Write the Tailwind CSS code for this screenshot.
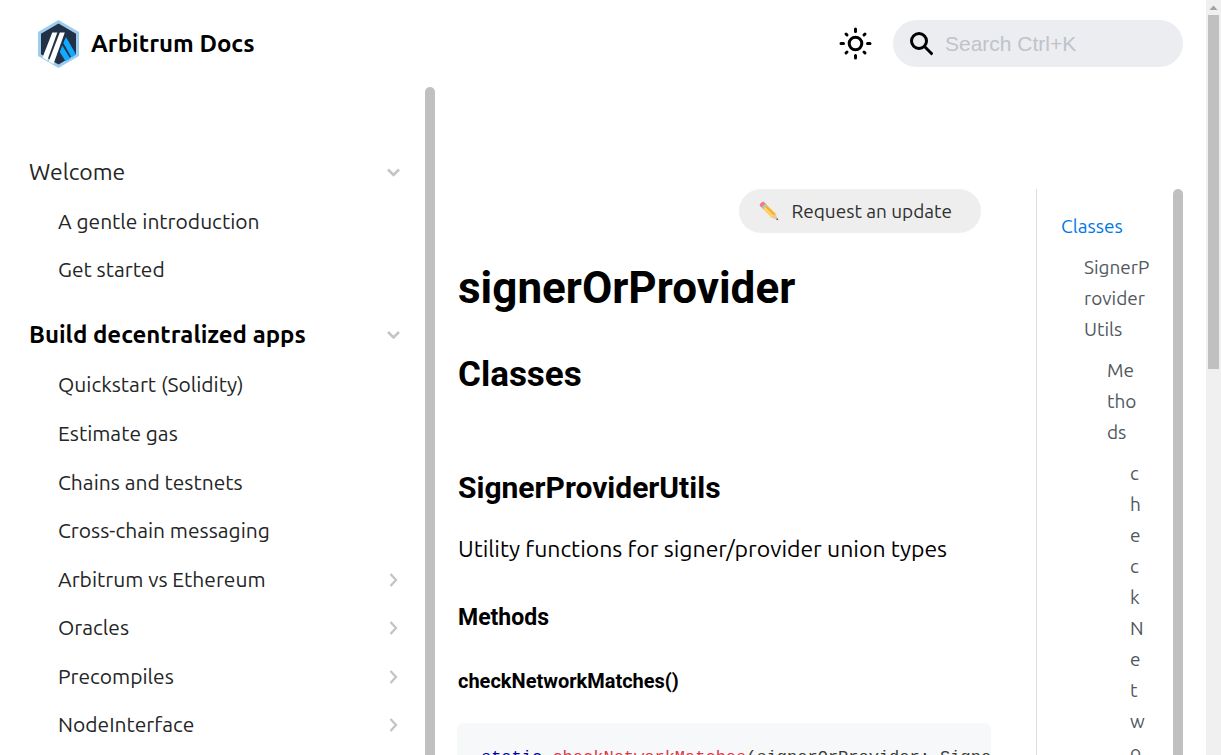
<!DOCTYPE html>
<html lang="en">
<head>
<meta charset="utf-8">
<title>signerOrProvider | Arbitrum Docs</title>
<script src="https://cdn.jsdelivr.net/npm/@tailwindcss/browser@4"></script>
</head>
<body class="flex h-screen overflow-hidden bg-white font-['Ubuntu','Noto_Sans',sans-serif] text-black">
<div class="flex min-w-0 flex-1 flex-col">
  <header class="flex h-[87px] shrink-0 items-center justify-between pr-[23px] pl-[38px]">
    <a href="#" class="flex items-center gap-3 text-2xl font-bold">
      <svg class="h-12 w-[41px]" viewBox="0 0 41 48" aria-hidden="true">
        <path d="M20.500 0 41 12v24L20.500 48 0 36V12z" fill="#9dcced"/>
        <path d="M20.500 3.500 38 13.700v20.600L20.500 44.500 3 34.300V13.700z" fill="#213147"/>
        <path d="M28 17 38 34.500 33.500 37.500 25.300 23z" fill="#12aaff"/>
        <path d="M24.300 25.500 32.300 38.500 27.500 41.300 21.800 32z" fill="#12aaff"/>
        <path d="M14.300 12.500h5L9.300 40.500 4.500 37.500z" fill="#fff"/>
        <path d="M21.800 12.500h5L15.500 44 10.700 41.500z" fill="#fff"/>
      </svg>
      <span>Arbitrum Docs</span>
    </a>
    <div class="flex items-center gap-5">
      <button type="button" aria-label="Switch theme" class="flex size-9 items-center justify-center">
        <svg class="size-9" viewBox="0 0 36 36" fill="none" stroke="#000" stroke-width="3" stroke-linecap="round" aria-hidden="true">
          <circle cx="18.500" cy="17.500" r="6.300"/>
          <path d="M18.500 3v2.500M18.500 29.500V32M4 17.500h2.500M30.500 17.500H33M9 8l1 1M27 26l1 1M9 27l1-1M27 9l1-1"/>
        </svg>
      </button>
      <label class="flex h-[47px] w-[290px] items-center gap-3 rounded-full bg-[#ebedf0] px-4">
        <svg class="size-6 shrink-0" viewBox="0 0 24 24" fill="none" stroke="#000" stroke-width="3" aria-hidden="true">
          <circle cx="10" cy="9" r="7.500"/><path d="m15.500 14.500 8 8"/>
        </svg>
        <input type="search" aria-label="Search" placeholder="Search Ctrl+K" class="w-full min-w-0 bg-transparent font-['Liberation_Sans',sans-serif] text-[21px] outline-none placeholder:text-[#bfc3c9]">
      </label>
    </div>
  </header>
  <div class="flex min-h-0 flex-1">
    <aside class="flex w-[435px] shrink-0">
      <nav aria-label="Docs" class="flex-1 overflow-hidden pt-[60px] pr-6 pl-[29px] text-[21px] text-[#242526]">
        <button type="button" class="flex h-[51px] w-full items-center justify-between text-[23px]"><span>Welcome</span>
          <svg class="size-4" viewBox="0 0 16 16" fill="none" stroke="#c4c4c4" stroke-width="2.500" aria-hidden="true"><path d="m3 4.500 5.500 5.500L14 4.500"/></svg></button>
        <ul class="pl-[29px]">
          <li class="flex h-12 items-center"><a href="#">A gentle introduction</a></li>
          <li class="flex h-12 items-center"><a href="#">Get started</a></li>
        </ul>
        <button type="button" class="mt-[15px] flex h-[51px] w-full items-center justify-between text-2xl font-bold text-black"><span>Build decentralized apps</span>
          <svg class="size-4" viewBox="0 0 16 16" fill="none" stroke="#c4c4c4" stroke-width="2.500" aria-hidden="true"><path d="m3 5 5.500 5.500L14 5"/></svg></button>
        <ul class="pl-[29px]">
          <li class="flex h-[49px] items-center"><a href="#">Quickstart (Solidity)</a></li>
          <li class="flex h-[49px] items-center"><a href="#">Estimate gas</a></li>
          <li class="flex h-[49px] items-center"><a href="#">Chains and testnets</a></li>
          <li class="flex h-12 items-center"><a href="#">Cross-chain messaging</a></li>
          <li class="flex h-[49px] items-center justify-between"><a href="#">Arbitrum vs Ethereum</a>
            <svg class="size-4" viewBox="0 0 16 16" fill="none" stroke="#c4c4c4" stroke-width="2.300" aria-hidden="true"><path d="m5.500 2 5.500 6-5.500 6"/></svg></li>
          <li class="flex h-12 items-center justify-between"><a href="#">Oracles</a>
            <svg class="size-4" viewBox="0 0 16 16" fill="none" stroke="#c4c4c4" stroke-width="2.300" aria-hidden="true"><path d="m5.500 2 5.500 6-5.500 6"/></svg></li>
          <li class="flex h-[49px] items-center justify-between"><a href="#">Precompiles</a>
            <svg class="size-4" viewBox="0 0 16 16" fill="none" stroke="#c4c4c4" stroke-width="2.300" aria-hidden="true"><path d="m5.500 2 5.500 6-5.500 6"/></svg></li>
          <li class="flex h-12 items-center justify-between"><a href="#">NodeInterface</a>
            <svg class="size-4" viewBox="0 0 16 16" fill="none" stroke="#c4c4c4" stroke-width="2.300" aria-hidden="true"><path d="m5.500 2 5.500 6-5.500 6"/></svg></li>
        </ul>
      </nav>
      <div class="w-2.5 rounded-t-full bg-[#c0c0c0]"></div>
    </aside>
    <main class="flex min-w-0 flex-1 overflow-hidden pt-[102px] pr-[23px] pl-[22px]">
      <article class="min-w-0 flex-1 pr-[45px] font-['Roboto',sans-serif]">
        <div class="flex justify-end pr-2.5">
          <a href="#" class="flex h-11 items-center gap-3 rounded-full bg-[#eeeeee] pr-[29px] pl-5 font-['Ubuntu','Noto_Sans',sans-serif] text-[19px] text-[#303030]">
            <svg class="size-5" viewBox="0 0 20 20" aria-hidden="true">
              <path d="m6 2 10.500 10.500 2 6-6-2L2 6z" fill="#ffc64a"/>
              <path d="m4.700 7.300 2.700-2.700L16.500 13l-2.600 3z" fill="#f5b23b"/>
              <path d="m6.200 6.200 9.500 9.500-1.800.8L4 6.600z" fill="#ffda73"/>
              <path d="M12.500 16.500 16.500 12.500 19 19z" fill="#e6c9a8"/>
              <path d="m17 18.300 1.300-1.300 1.200 2.500z" fill="#545454"/>
              <path d="M2.500 6.500 6.500 2.500 8 4 4 8z" fill="#9bcbd5"/>
              <path d="M1 5C-.5 3.500 3.500-.5 5 1l1.500 1.500-4 4z" fill="#f2788a"/>
            </svg>
            <span>Request an update</span>
          </a>
        </div>
        <h1 class="mt-7 pl-px text-[44px] leading-[54px] font-bold">signerOrProvider</h1>
        <h2 class="mt-[37px] pl-px text-[35px] leading-[46px] font-bold">Classes</h2>
        <h3 class="mt-[70px] pl-px text-[30px] leading-10 font-bold">SignerProviderUtils</h3>
        <p class="mt-[23px] pl-px font-['Ubuntu','Noto_Sans',sans-serif] text-[23px] leading-9">Utility functions for signer/provider union types</p>
        <h4 class="mt-[35px] pl-px text-[23px] leading-8 font-bold">Methods</h4>
        <h5 class="mt-[33px] pl-px text-xl leading-7 font-bold">checkNetworkMatches()</h5>
        <pre class="mt-7 overflow-hidden rounded-md bg-[#f6f8fa] px-6 py-[23px] font-['Liberation_Mono',monospace] text-[17px] leading-6 text-[#393a34]"><code><span class="text-[#00009f]">static</span> <span class="text-[#d73a49]">checkNetworkMatches</span>(signerOrProvider: SignerOrProvider, chainId: number)</code></pre>
      </article>
      <nav aria-label="On this page" class="flex w-[147px] shrink-0">
        <ul class="flex-1 border-l border-[#dadde1] pt-[22px] pl-6 text-[19px] leading-[31px] text-[#525860]">
          <li><a href="#" class="text-[#0077e6]">Classes</a>
            <ul class="mt-2.5 pl-[23px]">
              <li class="w-[66px]"><a href="#" class="break-all">SignerProviderUtils</a>
                <ul class="mt-2.5 w-[53px] pl-[23px]">
                  <li><a href="#" class="break-all">Methods</a>
                    <ul class="mt-2.5 pl-[23px]">
                      <li class="w-4"><a href="#" class="break-all">checkNetworkMatches()</a></li>
                    </ul>
                  </li>
                </ul>
              </li>
            </ul>
          </li>
        </ul>
        <div class="w-2.5 shrink-0 rounded-t-full bg-[#c0c0c0]"></div>
      </nav>
    </main>
  </div>
</div>
<div class="flex w-[15px] shrink-0 flex-col items-center bg-[#f0f0f0]" aria-hidden="true">
  <svg class="h-[15px] w-[15px] shrink-0" viewBox="0 0 15 15"><path d="m7.500 5.500 4 4.500h-8z" fill="#a3a3a3"/></svg>
  <div class="h-[354px] w-[11px] shrink-0 bg-[#c0c0c0]"></div>
</div>
</body>
</html>
